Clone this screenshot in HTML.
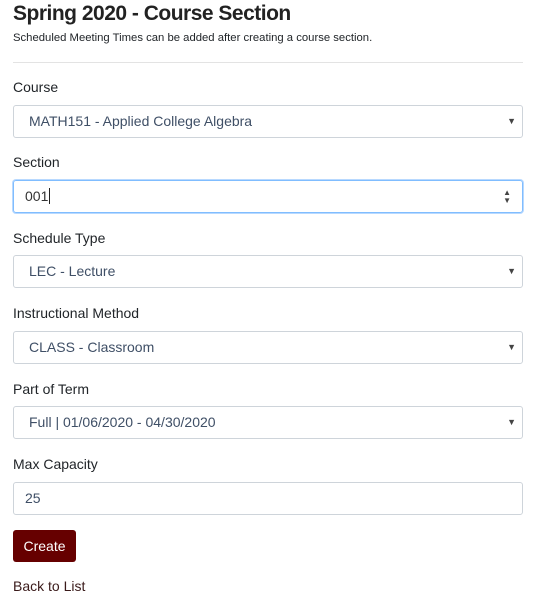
<!DOCTYPE html>
<html><head><style>
body{margin:0;width:536px;height:607px;background:#fff;font-family:"Liberation Sans",sans-serif;color:#212529;position:relative;overflow:hidden}
.a{position:absolute;left:13px;white-space:nowrap}
h1{position:absolute;left:13px;top:2px;margin:0;font-size:21px;font-weight:bold;color:#222;letter-spacing:-0.5px}
.sub{top:32px;font-size:11.3px}
.hr{position:absolute;left:13px;width:510px;top:62px;border-top:1px solid #e3e3e3}
.lbl{font-size:14px;color:#212529}
.box{position:absolute;left:13px;width:508px;height:31px;border:1px solid #ced4da;border-radius:3px;font-size:14px;color:#3f4f66;line-height:31px;box-sizing:content-box}
.box span{position:absolute;left:15px}
.arr{position:absolute;right:6px;top:0;font-size:9px;color:#444}
.focus{border-color:#80bdff;box-shadow:0 0 0 1px #b8d9ff}
.btn{position:absolute;left:13px;top:530px;width:63px;height:32px;background:#660000;border-radius:3px;color:#fff;font-size:14px;line-height:32px;text-align:center}
</style></head><body>
<h1>Spring 2020 - Course Section</h1>
<div class="a sub">Scheduled Meeting Times can be added after creating a course section.</div>
<div class="hr"></div>
<div class="a lbl" style="top:79px">Course</div>
<div class="box" style="top:105px"><span>MATH151 - Applied College Algebra</span><b class="arr">▼</b></div>
<div class="a lbl" style="top:154px">Section</div>
<div class="box focus" style="top:180px"><span style="left:11px;color:#333">001<span style="position:static;border-left:1px solid #222;margin-left:1px"></span></span><b class="arr" style="font-size:8px;line-height:8px;top:8px;right:11px">▲<br>▼</b></div>
<div class="a lbl" style="top:230px">Schedule Type</div>
<div class="box" style="top:255px"><span>LEC - Lecture</span><b class="arr">▼</b></div>
<div class="a lbl" style="top:305px">Instructional Method</div>
<div class="box" style="top:331px"><span>CLASS - Classroom</span><b class="arr">▼</b></div>
<div class="a lbl" style="top:381px">Part of Term</div>
<div class="box" style="top:406px"><span>Full | 01/06/2020 - 04/30/2020</span><b class="arr">▼</b></div>
<div class="a lbl" style="top:456px">Max Capacity</div>
<div class="box" style="top:482px"><span style="left:11px">25</span></div>
<div class="btn">Create</div>
<div class="a lbl" style="top:578px;color:#3a1a1a">Back to List</div>
</body></html>
